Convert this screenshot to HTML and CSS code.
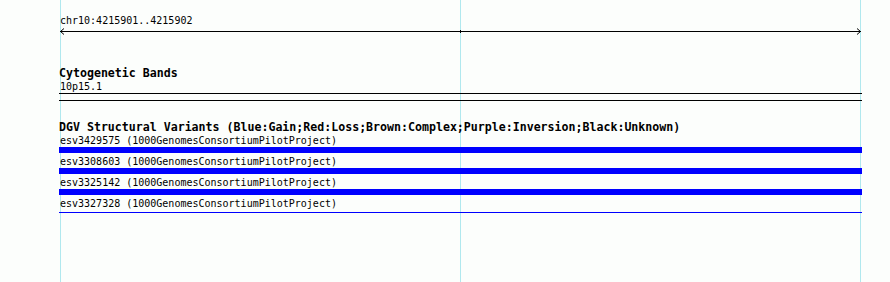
FILE: index.html
```html
<!DOCTYPE html>
<html lang="en">
<head>
    <meta charset="UTF-8">
    <title>chr10:4215901..4215902</title>
    <link rel="stylesheet" href="styles.css">
</head>
<body>
    <div class="view">
        <div class="gridlines">
            <div class="gridline g-left"></div>
            <div class="gridline g-mid"></div>
            <div class="gridline g-right"></div>
        </div>

        <div class="panel">
            <div class="ruler-label">chr10:4215901..4215902</div>
            <svg class="ruler" width="803" height="9" viewBox="0 0 803 9">
                <line x1="1" y1="4.5" x2="802" y2="4.5" stroke="#000" stroke-width="1"/>
                <polyline points="5,1.5 1.5,4.5 5,7.5" fill="none" stroke="#000" stroke-width="1"/>
                <polyline points="798,1.5 801.5,4.5 798,7.5" fill="none" stroke="#000" stroke-width="1"/>
                <line x1="401.5" y1="3" x2="401.5" y2="6" stroke="#000" stroke-width="1"/>
            </svg>

            <div class="track cyto">
                <div class="track-title">Cytogenetic Bands</div>
                <div class="feature-label">10p15.1</div>
                <div class="band"></div>
            </div>

            <div class="track dgv">
                <div class="track-title">DGV Structural Variants (Blue:Gain;Red:Loss;Brown:Complex;Purple:Inversion;Black:Unknown)</div>
                <div class="feature">
                    <div class="feature-label">esv3429575 (1000GenomesConsortiumPilotProject)</div>
                    <div class="bar gain"></div>
                </div>
                <div class="feature">
                    <div class="feature-label">esv3308603 (1000GenomesConsortiumPilotProject)</div>
                    <div class="bar gain"></div>
                </div>
                <div class="feature">
                    <div class="feature-label">esv3325142 (1000GenomesConsortiumPilotProject)</div>
                    <div class="bar gain"></div>
                </div>
                <div class="feature">
                    <div class="feature-label">esv3327328 (1000GenomesConsortiumPilotProject)</div>
                    <div class="bar gain thin"></div>
                </div>
            </div>
        </div>
    </div>
</body>
</html>
```

FILE: styles.css
```css
body {
    margin: 0;
    background: #fcfefc;
    font-family: "DejaVu Sans Mono", "Liberation Mono", monospace;
    color: #000;
}
.view {
    position: relative;
    width: 890px;
    height: 282px;
    overflow: hidden;
}
.gridlines {
    position: absolute;
    top: 0;
    left: 0;
    right: 0;
    bottom: 0;
}
.gridline {
    position: absolute;
    top: 0;
    bottom: 0;
    width: 1px;
    background: #b0e8ee;
}
.g-left {
    left: 60px;
}
.g-mid {
    left: 460px;
}
.g-right {
    left: 860px;
}
.panel {
    position: relative;
    margin-left: 59px;
    width: 803px;
    padding-top: 15px;
}
.ruler-label,
.feature-label {
    font-size: 10px;
    line-height: 11px;
    padding-left: 1px;
    white-space: nowrap;
}
.ruler {
    display: block;
    margin-top: 1px;
}
.track-title {
    font-size: 11.6px;
    line-height: 13px;
    font-weight: bold;
    white-space: nowrap;
}
.cyto {
    margin-top: 31px;
}
.cyto .feature-label {
    margin-top: 1px;
}
.band {
    margin-top: 1px;
    height: 6px;
    border-top: 1px solid #000;
    border-bottom: 1px solid #000;
}
.dgv {
    margin-top: 20px;
}
.feature {
    margin-top: 1px;
    margin-bottom: 3px;
}
.bar {
    margin-top: 1px;
    height: 6px;
}
.gain {
    background: #0000ff;
}
.bar.thin {
    height: 1px;
    margin-top: 3px;
}
```
